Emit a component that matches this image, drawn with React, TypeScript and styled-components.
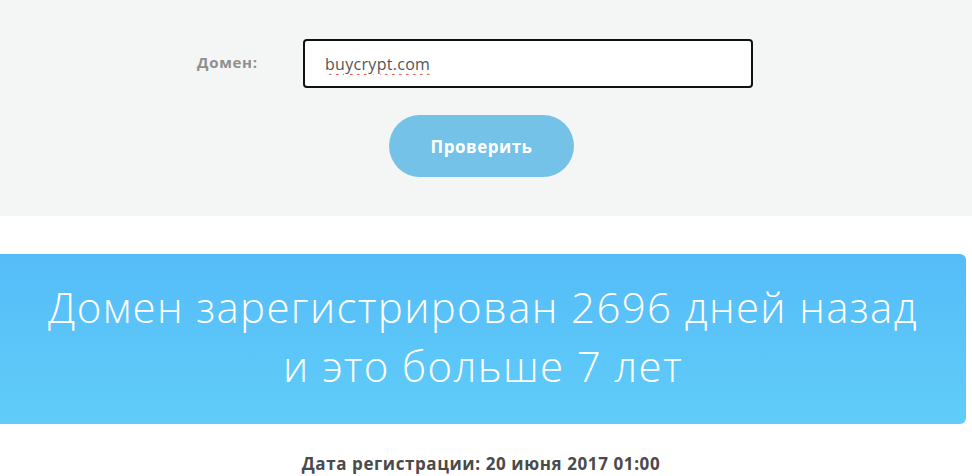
import React from "react";
import styled, { createGlobalStyle } from "styled-components";

const Global = createGlobalStyle`
  html, body { margin: 0; padding: 0; background: #ffffff; }
  body { font-family: "Open Sans", "Noto Sans", sans-serif; overflow: hidden; }
  * { box-sizing: border-box; }
`;

const Page = styled.div`
  width: 972px;
  display: flex;
  flex-direction: column;
`;

const FormPanel = styled.section`
  background: #f4f5f5;
  height: 216px;
  display: flex;
  flex-direction: column;
  align-items: center;
  padding-top: 39px;
`;

const FieldRow = styled.div`
  display: flex;
  align-items: center;
  margin-right: 22px;
`;

const Label = styled.label`
  width: 106px;
  font-family: "Open Sans", sans-serif;
  font-weight: 700;
  font-size: 15px;
  letter-spacing: 0.7px;
  color: #8f8f8f;
  padding-bottom: 3px;
`;

const Input = styled.input`
  height: 49px;
  width: 450px;
  border: 2px solid #111111;
  border-radius: 4px;
  background: #ffffff;
  padding: 0 20px;
  font-family: "Open Sans", sans-serif;
  font-size: 16px;
  letter-spacing: 0.3px;
  color: #555555;
  outline: none;
  text-decoration: underline wavy #e0392b;
  text-decoration-thickness: 1px;
  text-underline-offset: 3px;
`;

const CheckButton = styled.button`
  margin-top: 27px;
  margin-right: 9px;
  width: 185px;
  height: 62px;
  border: none;
  border-radius: 31px;
  background: #74c2e7;
  color: #ffffff;
  font-family: "Open Sans", sans-serif;
  font-weight: 700;
  font-size: 17px;
  letter-spacing: 0.5px;
  cursor: pointer;
`;

const Banner = styled.div`
  margin-top: 38px;
  width: 966px;
  height: 170px;
  border-radius: 0 6px 6px 0;
  background: linear-gradient(180deg, #55bcf8 0%, #60cdf8 100%);
  display: flex;
  align-items: center;
  justify-content: center;
`;

const BannerText = styled.h2`
  margin: 0;
  padding-bottom: 6px;
  font-family: "Open Sans", sans-serif;
  font-weight: 300;
  font-size: 42px;
  letter-spacing: 1.35px;
  line-height: 59px;
  color: #ffffff;
  text-align: center;
`;

const DateLine = styled.p`
  margin: 28px 0 0;
  text-align: center;
  padding-right: 10px;
  font-family: "Open Sans", sans-serif;
  font-weight: 700;
  font-size: 17px;
  letter-spacing: 0.6px;
  color: #4a4a4a;
`;

export default function App() {
  return (
    <Page>
      <Global />
      <FormPanel>
        <FieldRow>
          <Label htmlFor="domain">Домен:</Label>
          <Input id="domain" defaultValue="buycrypt.com" spellCheck={false} />
        </FieldRow>
        <CheckButton type="button">Проверить</CheckButton>
      </FormPanel>
      <Banner>
        <BannerText>
          Домен зарегистрирован 2696 дней назад
          <br />
          и это больше 7 лет
        </BannerText>
      </Banner>
      <DateLine>Дата регистрации: 20 июня 2017 01:00</DateLine>
    </Page>
  );
}
